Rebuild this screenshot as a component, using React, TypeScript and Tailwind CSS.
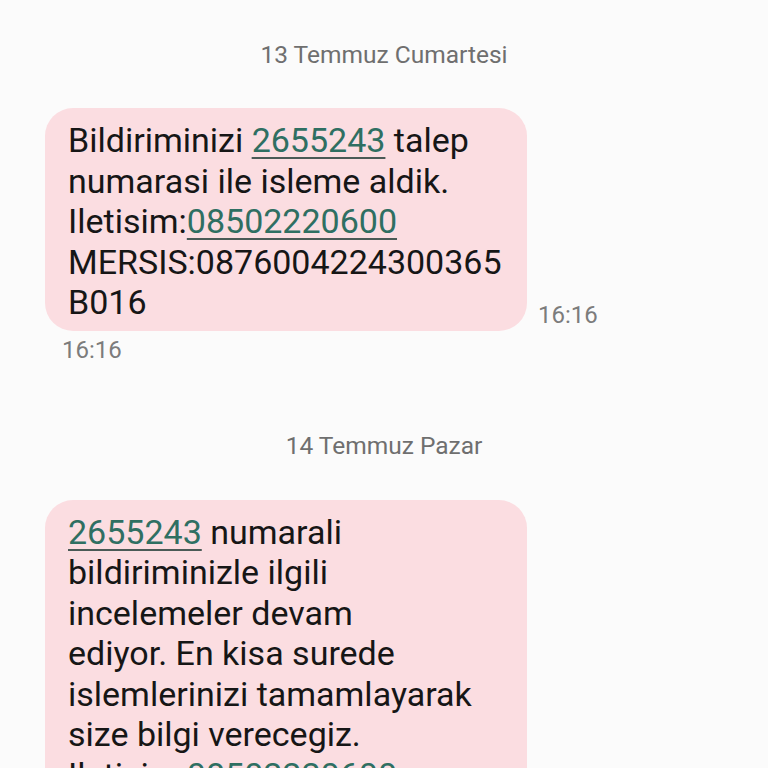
const Link = ({ children }: { children: string }) => (
  <span className="text-[#2f6f62] underline decoration-[#4a5a56] decoration-2 underline-offset-[5px]">{children}</span>
);

function DateLabel({ text }: { text: string }) {
  return <div className="text-center text-[24.5px] leading-[30px] text-[#6f6f6f]">{text}</div>;
}

export default function App() {
  return (
    <div className="h-[768px] w-[768px] overflow-hidden bg-[#fbfbfb] font-['Roboto',sans-serif]">
      <div className="pt-[40px]">
        <DateLabel text="13 Temmuz Cumartesi" />
      </div>

      <div className="mt-[38px] flex items-end">
        <div className="ml-[45px] w-[482px] rounded-[28px] bg-[#fbdde1] pb-[8px] pl-[23px] pt-[12px] text-[34px] leading-[40.5px] text-[#161616]">
          <div>Bildiriminizi <Link>2655243</Link> talep</div>
          <div>numarasi ile isleme aldik.</div>
          <div>Iletisim:<Link>08502220600</Link></div>
          <div>MERSIS:0876004224300365</div>
          <div>B016</div>
        </div>
        <div className="mb-[1px] ml-[11px] text-[24px] leading-[30px] text-[#7c7c7c]">16:16</div>
      </div>
      <div className="ml-[62px] mt-[4px] text-[24px] leading-[30px] text-[#7c7c7c]">16:16</div>

      <div className="mt-[66px]">
        <DateLabel text="14 Temmuz Pazar" />
      </div>

      <div className="mt-[39px] flex">
        <div className="ml-[45px] w-[482px] rounded-[28px] bg-[#fbdde1] pb-[8px] pl-[23px] pt-[12px] text-[34px] leading-[40.5px] text-[#161616]">
          <div><Link>2655243</Link> numarali</div>
          <div>bildiriminizle ilgili</div>
          <div>incelemeler devam</div>
          <div>ediyor. En kisa surede</div>
          <div>islemlerinizi tamamlayarak</div>
          <div>size bilgi verecegiz.</div>
          <div>Iletisim:<Link>08502220600</Link></div>
          <div>MERSIS:0876004224300365</div>
          <div>B016</div>
        </div>
      </div>
    </div>
  );
}
